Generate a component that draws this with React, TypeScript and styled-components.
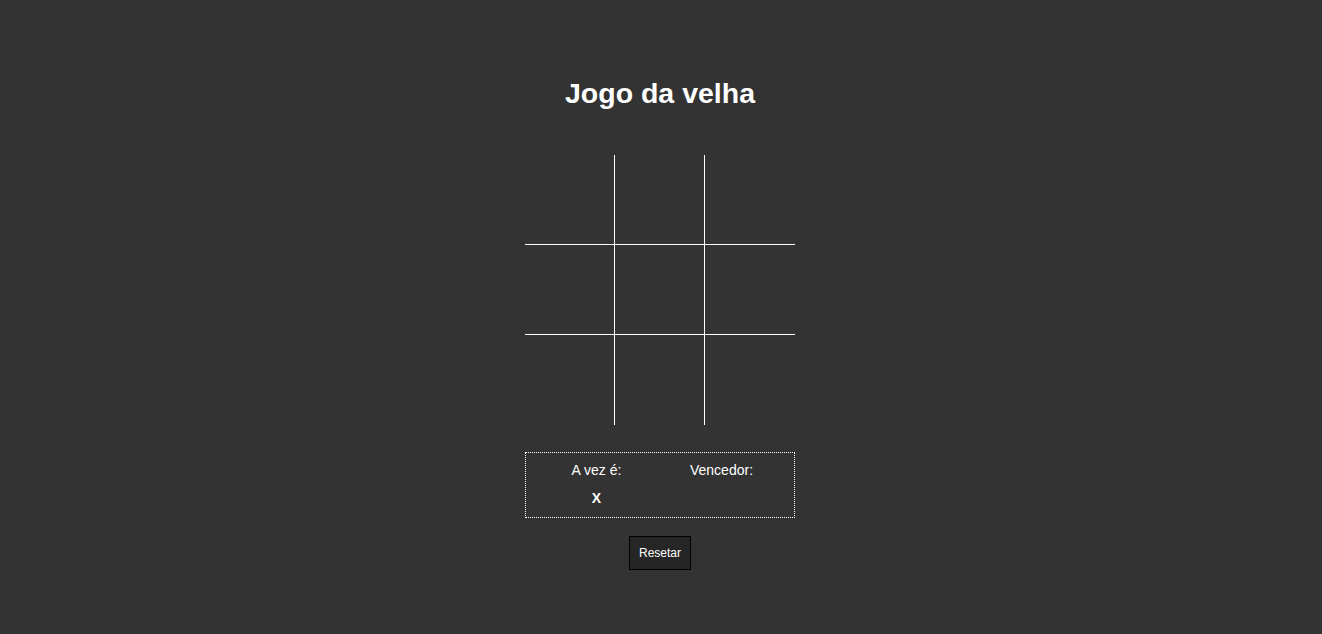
import { useState } from "react";
import styled, { createGlobalStyle } from "styled-components";

type Player = "X" | "O";
type Cell = Player | null;

const lines = [
  [0, 1, 2],
  [3, 4, 5],
  [6, 7, 8],
  [0, 3, 6],
  [1, 4, 7],
  [2, 5, 8],
  [0, 4, 8],
  [2, 4, 6],
];

const findWinner = (cells: Cell[]): Player | null => {
  for (const [a, b, c] of lines) {
    if (cells[a] && cells[a] === cells[b] && cells[a] === cells[c]) {
      return cells[a];
    }
  }
  return null;
};

export default function App() {
  const [cells, setCells] = useState<Cell[]>(Array(9).fill(null));
  const [turn, setTurn] = useState<Player>("X");

  const winner = findWinner(cells);

  const play = (idx: number) => {
    if (cells[idx] || winner) return;
    const next = [...cells];
    next[idx] = turn;
    setCells(next);
    setTurn(turn === "X" ? "O" : "X");
  };

  const reset = () => {
    setCells(Array(9).fill(null));
    setTurn("X");
  };

  return (
    <>
      <GlobalStyle />
      <Page>
        <Title>Jogo da velha</Title>
        <Board>
          {cells.map((value, idx) => (
            <Square
              key={idx}
              $right={idx % 3 !== 2}
              $bottom={idx < 6}
              onClick={() => play(idx)}
            >
              {value}
            </Square>
          ))}
        </Board>
        <Info>
          <InfoColumn>
            <Label>A vez é:</Label>
            <Value>{winner ? "" : turn}</Value>
          </InfoColumn>
          <InfoColumn>
            <Label>Vencedor:</Label>
            <Value>{winner ?? ""}</Value>
          </InfoColumn>
        </Info>
        <ResetButton onClick={reset}>Resetar</ResetButton>
      </Page>
    </>
  );
}

const GlobalStyle = createGlobalStyle`
  body {
    margin: 0;
    background: #333333;
    color: #ffffff;
    font-family: "Liberation Sans", Arial, sans-serif;
  }
`;

const Page = styled.main`
  display: flex;
  flex-direction: column;
  align-items: center;
  padding: 77px 2px 0 0;
`;

const Title = styled.h1`
  margin: 0 0 46px;
  font-size: 28.5px;
  line-height: 32px;
  font-weight: bold;
`;

const Board = styled.div`
  display: grid;
  grid-template-columns: repeat(3, 90px);
  grid-template-rows: repeat(3, 90px);
`;

const Square = styled.button<{ $right: boolean; $bottom: boolean }>`
  box-sizing: border-box;
  width: 90px;
  height: 90px;
  padding: 0;
  background: transparent;
  border: none;
  border-right: ${(p) => (p.$right ? "1px solid #ffffff" : "none")};
  border-bottom: ${(p) => (p.$bottom ? "1px solid #ffffff" : "none")};
  color: #ffffff;
  font-family: "Liberation Sans", Arial, sans-serif;
  font-size: 48px;
  font-weight: bold;
  cursor: pointer;
`;

const Info = styled.div`
  box-sizing: border-box;
  width: 270px;
  margin-top: 27px;
  padding: 9px 2px 11px 0;
  border: 1px dotted #ffffff;
  display: flex;
  justify-content: center;
  gap: 15px;
`;

const InfoColumn = styled.div`
  width: 110px;
  display: flex;
  flex-direction: column;
  align-items: center;
  gap: 12px;
`;

const Label = styled.span`
  font-size: 14px;
  line-height: 16px;
`;

const Value = styled.span`
  font-size: 14px;
  line-height: 16px;
  font-weight: bold;
  min-height: 16px;
`;

const ResetButton = styled.button`
  margin-top: 18px;
  padding: 9px 9px;
  background: #262626;
  border: 1px solid #000000;
  color: #ffffff;
  font-family: "Liberation Sans", Arial, sans-serif;
  font-size: 12px;
  line-height: 14px;
  cursor: pointer;
`;
